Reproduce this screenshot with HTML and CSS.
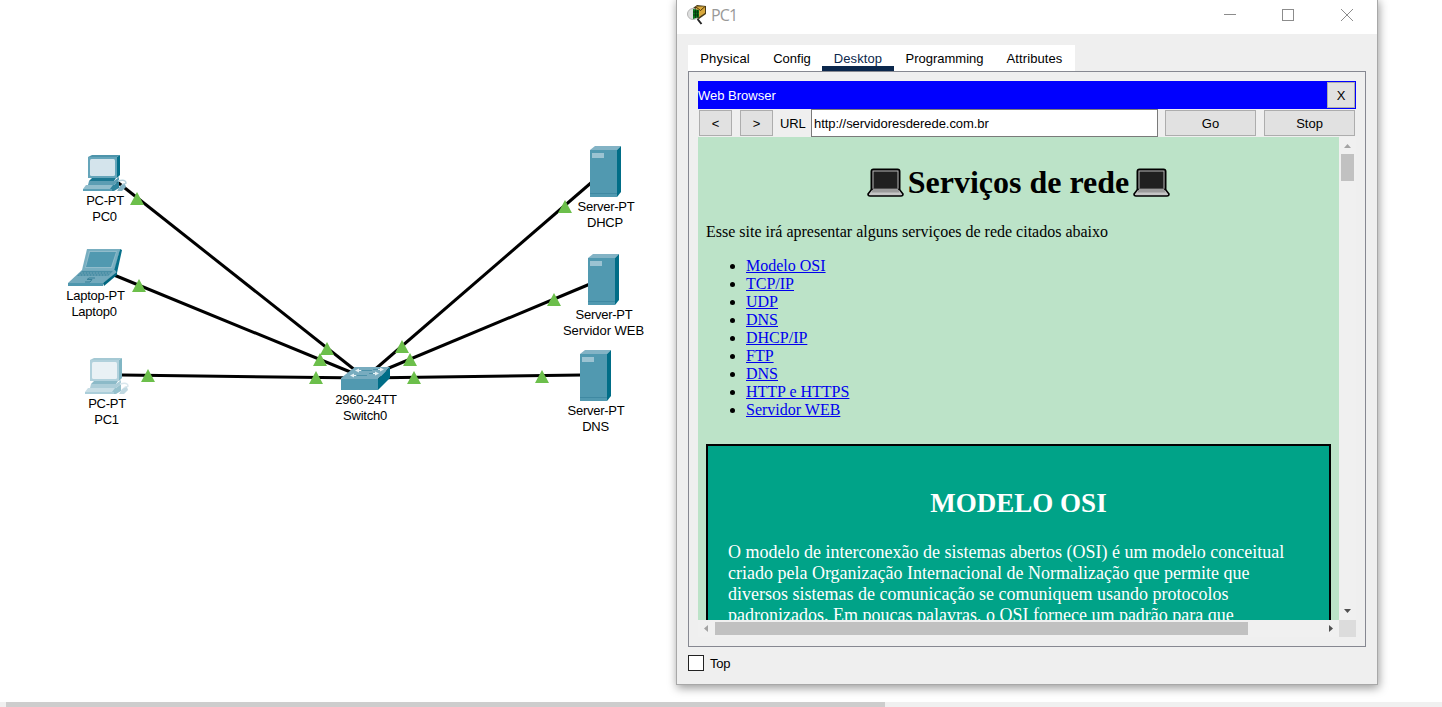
FILE: index.html
```html
<!DOCTYPE html>
<html lang="pt-BR">
<head>
<meta charset="utf-8">
<title>PC1</title>
<link rel="stylesheet" href="styles.css">
</head>
<body>
<main class="workspace">
  <svg class="topology" width="676" height="702" viewBox="0 0 676 702">
    <defs>
      <g id="server">
        <path d="M0 4L5 0H31L27 4Z" fill="#83b3c5"/>
        <path d="M27 4L31 0V46L27 51Z" fill="#006d87"/>
        <path d="M0 4H27V51H0Z" fill="#5199b0"/>
        <path d="M2 7H14V12H2Z" fill="#9bc3d2"/>
        <path d="M0 47.5H27" stroke="#3f89a2"/>
      </g>
      <g id="pc">
        <path d="M5 2L9 0H37L34 2Z" fill="#4d94ab"/>
        <path d="M34 2L37 0V20L34 23Z" fill="#06708a"/>
        <path d="M5 2H34V23H5Z" fill="#65a5ba"/>
        <rect x="7" y="4" width="25" height="17" rx="1.5" fill="#d4e4ec"/>
        <path d="M9 23H33L31 26H6Z" fill="#1c7892"/>
        <path d="M6 26H31L36 22V26L31 30H5Z" fill="#5b9db3"/>
        <path d="M4 30H31L36 26V33L31 36H0Z" fill="#2f849d"/>
        <path d="M3 30H30L27 34H0Z" fill="#91bdcc"/>
        <path d="M0 34H29V36H0Z" fill="#5a9fb6"/>
        <path d="M35 26Q43 24 43 28Q40 29 38 31" fill="none" stroke="#b4d0dc" stroke-width="1.5"/>
        <path d="M37 31L42 29L43 32L39 36H34Z" fill="#82b2c4"/>
      </g>
      <path id="link-up" d="M0-7L7 6H-7Z" fill="#6cbf4b"/>
    </defs>
    <g stroke="#000" stroke-width="3">
      <path d="M116 181L365 378"/>
      <path d="M114 275L365 378"/>
      <path d="M122 375L365 378"/>
      <path d="M592 182L365 378"/>
      <path d="M590 284L365 378"/>
      <path d="M582 375L365 378"/>
    </g>
    <use href="#pc" x="83" y="155"/>
    <g transform="translate(68 249)">
      <path d="M19 0H52L47 21H14Z" fill="#78aec0"/>
      <path d="M52 0L54 1L49 24L46 22Z" fill="#06708a"/>
      <path d="M21 2H49L44 19H17Z" fill="#91bccb"/>
      <path d="M22 3H48L43 18H18Z" fill="#5199b0"/>
      <path d="M14 21H47L49 24L35 34H0Z" fill="#72a9bc"/>
      <path d="M14 22H45L40 27H9Z" fill="#4a8fa6"/>
      <path d="M13 24H42M11 26H40" stroke="#84b3c3" stroke-width=".6" stroke-dasharray="2 1"/>
      <path d="M35 34L49 23V26L36 37Z" fill="#00667f"/>
      <path d="M0 34H35V37H0Z" fill="#4f97ae"/>
      <path d="M27 29H21L19 30.500H24L22 33H17" fill="none" stroke="#357f97"/>
    </g>
    <use href="#pc" x="85" y="358" opacity=".5"/>
    <use href="#server" x="590" y="146"/>
    <use href="#server" x="588" y="254"/>
    <use href="#server" x="580" y="350"/>
    <g transform="translate(341 367)">
      <path d="M0 11L14 0H49L37 12H0Z" fill="#78acbf"/>
      <path d="M37 12L49 0V11L37 23Z" fill="#006d87"/>
      <path d="M0 12H37V23H0Z" fill="#5199b0"/>
      <path d="M21 3.500H31M16 8.500H26M32 2.500H38M28 6.500H33" stroke="#4d92a9" stroke-width="1"/>
      <path d="M14 3.500L18 1.500V3H20V4H18V5.500ZM9 8.500L13 6.500V8H15V9H13V10.500ZM43 2.500L39 .5V2H37V3H39V4.500ZM38 6.500L34 4.500V6H32V7H34V8.500Z" fill="#e4f0f4"/>
    </g>
    <use href="#link-up" x="137" y="199"/>
    <use href="#link-up" x="139" y="286"/>
    <use href="#link-up" x="148" y="376"/>
    <use href="#link-up" x="327" y="349"/>
    <use href="#link-up" x="320" y="360"/>
    <use href="#link-up" x="316" y="378"/>
    <use href="#link-up" x="402" y="347"/>
    <use href="#link-up" x="410" y="360"/>
    <use href="#link-up" x="414" y="378"/>
    <use href="#link-up" x="565" y="207"/>
    <use href="#link-up" x="554" y="300"/>
    <use href="#link-up" x="542" y="377"/>
    <g class="node-label">
      <text x="105" y="205">PC-PT</text><text x="104.500" y="221">PC0</text>
      <text x="95.500" y="300">Laptop-PT</text><text x="94" y="316">Laptop0</text>
      <text x="107" y="408">PC-PT</text><text x="106.500" y="424">PC1</text>
      <text x="366" y="404">2960-24TT</text><text x="365" y="420">Switch0</text>
      <text x="606" y="211">Server-PT</text><text x="605" y="227">DHCP</text>
      <text x="604" y="319">Server-PT</text><text class="wide" x="603.500" y="335">Servidor WEB</text>
      <text x="596" y="415">Server-PT</text><text x="595.500" y="431">DNS</text>
    </g>
  </svg>
  <div class="canvas-scroll"><div class="canvas-thumb"></div></div>

  <section class="window">
    <header class="titlebar">
      <svg class="app-icon" width="20" height="20" viewBox="0 0 20 20">
        <path d="M6 3L10 0L19 1V9L12 14L6 12Z" fill="#493b19"/>
        <path d="M9 1.500L18 1.500V8L12 12L9 9Z" fill="#d8a83c"/>
        <path d="M9 2L13.500 5.500L18 1.500" fill="none" stroke="#4d350b"/>
        <circle cx="6" cy="9" r="5.500" fill="#dedfdf" stroke="#b5b5b5"/>
        <path d="M6 4L12 5V12L6 14Z" fill="#08791b"/>
        <path d="M8.500 4.500V13M10.500 5V12.500M6 7H12M6 10H12" stroke="#092c0c" stroke-width=".8"/>
        <path d="M10.500 14L14.500 19" stroke="#222" stroke-width="2"/>
      </svg>
      <span class="title">PC1</span>
      <svg class="controls" width="130" height="14" viewBox="0 0 130 14" fill="none" stroke="#8c8c8c">
        <path d="M0 6.500H12"/><rect x="58.500" y="1.500" width="11" height="11"/><path d="M117 1L129 13M129 1L117 13"/>
      </svg>
    </header>
    <nav class="tabs">
      <span class="tab physical">Physical</span><span class="tab config">Config</span><span class="tab desktop">Desktop</span><span class="tab programming">Programming</span><span class="tab attributes">Attributes</span>
    </nav>
    <div class="panel">
      <div class="app-bar"><span>Web Browser</span><button class="btn close">X</button></div>
      <div class="address-row">
        <button class="btn nav">&lt;</button><button class="btn nav">&gt;</button>
        <label class="url-label">URL</label>
        <div class="url-field">http://servidoresderede.com.br</div>
        <button class="btn action">Go</button><button class="btn action">Stop</button>
      </div>
      <div class="viewport">
        <article class="page">
          <h1 class="page-title">
            <svg class="laptop" width="37" height="30" viewBox="0 0 37 30">
              <rect x="4.500" y="1.500" width="28" height="21" rx="2" fill="#202020" stroke="#000" stroke-width="2"/>
              <rect x="6" y="3" width="25" height="18" fill="#202020" stroke="#b5b5b5"/>
              <path d="M4.500 21.500H32.500L36 26Q36 28 34 28H3Q1 28 1 26Z" fill="#c5c5c5" stroke="#000" stroke-width="1.600"/>
              <path d="M6 21H31L32.500 24.500H4.500Z" fill="#9b9b9b"/>
            </svg><span class="heading">Serviços de rede</span><svg class="laptop" width="37" height="30" viewBox="0 0 37 30">
              <rect x="4.500" y="1.500" width="28" height="21" rx="2" fill="#202020" stroke="#000" stroke-width="2"/>
              <rect x="6" y="3" width="25" height="18" fill="#202020" stroke="#b5b5b5"/>
              <path d="M4.500 21.500H32.500L36 26Q36 28 34 28H3Q1 28 1 26Z" fill="#c5c5c5" stroke="#000" stroke-width="1.600"/>
              <path d="M6 21H31L32.500 24.500H4.500Z" fill="#9b9b9b"/>
            </svg>
          </h1>
          <p class="intro">Esse site irá apresentar alguns serviçoes de rede citados abaixo</p>
          <ul class="links">
            <li><a href="#osi">Modelo OSI</a></li><li><a href="#">TCP/IP</a></li><li><a href="#">UDP</a></li><li><a href="#">DNS</a></li><li><a href="#">DHCP/IP</a></li><li><a href="#">FTP</a></li><li><a href="#">DNS</a></li><li><a href="#">HTTP e HTTPS</a></li><li><a href="#">Servidor WEB</a></li>
          </ul>
          <section class="card" id="osi">
            <h2 class="card-title">MODELO OSI</h2>
            <p class="card-text">O modelo de interconexão de sistemas abertos (OSI) é um modelo conceitual<br>criado pela Organização Internacional de Normalização que permite que<br>diversos sistemas de comunicação se comuniquem usando protocolos<br>padronizados. Em poucas palavras, o OSI fornece um padrão para que</p>
          </section>
        </article>
        <div class="vscroll">
          <svg width="17" height="17"><path d="M5 11H12L8.500 7Z" fill="#a3a3a3"/></svg>
          <div class="vthumb"></div>
          <svg class="down" width="17" height="17"><path d="M5 6H12L8.500 10Z" fill="#505050"/></svg>
        </div>
        <div class="hscroll">
          <svg width="17" height="17"><path d="M10 5V12L6 8.500Z" fill="#a3a3a3"/></svg>
          <div class="hthumb"></div>
          <svg class="right" width="17" height="17"><path d="M7 5V12L11 8.500Z" fill="#505050"/></svg>
        </div>
        <div class="corner"></div>
      </div>
    </div>
    <div class="top-option"><span class="checkbox"></span><span>Top</span></div>
  </section>
</main>
</body>
</html>
```

FILE: styles.css
```css
* { box-sizing: border-box; }
body { margin: 0; background: #fff; overflow: hidden; font: 13px "Liberation Sans", Arial, sans-serif; color: #000; }
svg { display: block; flex: none; }
.workspace { position: relative; width: 1442px; height: 707px; overflow: hidden; }
.topology { height: 702px; }
.node-label { font-size: 13px; text-anchor: middle; letter-spacing: -.25px; }
.wide { letter-spacing: -.05px; }
.canvas-scroll { height: 5px; background: #f0f0f0; padding-left: 6px; }
.canvas-thumb { width: 879px; height: 5px; background: #cdcdcd; }

.window { position: absolute; left: 676px; top: -2px; width: 702px; height: 687px; border: 1px solid #a8a8a8; background: #efefef; box-shadow: 1px 3px 9px rgba(0,0,0,.4); padding-right: 11px; display: flex; flex-direction: column; }
.titlebar { height: 35px; margin-right: -11px; padding: 0 23px 0 10px; background: #fff; display: flex; align-items: center; }
.app-icon { margin-bottom: 3px; }
.title { font: 16px "Open Sans", sans-serif; letter-spacing: -.9px; color: #999; margin-left: 4px; margin-bottom: 3px; }
.controls { margin-left: auto; margin-bottom: 4px; }
.tabs { display: flex; width: 387px; height: 26px; margin: 11px 0 0 11px; background: #fff; line-height: 27px; }
.tab { text-align: center; }
.physical { width: 74px; letter-spacing: .15px; }
.config { width: 60px; }
.desktop { width: 72px; color: #0b274c; border-bottom: 5px solid #0b274c; letter-spacing: .1px; }
.programming { width: 101px; }
.attributes { width: 79px; letter-spacing: .1px; }
.panel { width: 678px; height: 576px; margin-left: 11px; border: 1px solid #868891; padding: 9px 9px 0; }
.app-bar { width: 658px; height: 28px; padding-right: 1px; background: #00f; color: #fff; display: flex; align-items: center; justify-content: space-between; }
.btn { height: 26px; padding: 0; border: 1px solid #adadad; background: #e1e1e1; font: inherit; color: #000; }
.close { width: 28px; }
.address-row { display: flex; width: 658px; height: 28px; padding: 1px 1px 0; }
.nav { width: 33px; margin-right: 8px; }
.url-label { line-height: 27px; width: 30px; margin-left: -1px; margin-right: 1px; letter-spacing: -.2px; }
.url-field { width: 347px; height: 28px; margin-top: -1px; border: 1px solid #7a7a7a; background: #fff; line-height: 27px; padding-left: 2px; letter-spacing: -.05px; }
.action { width: 91px; margin-left: 7px; }
.action + .action { margin-left: 8px; }
.viewport { display: grid; grid-template: 483px 17px / 641px 17px; width: 658px; }
.page { background: #bce3c8; height: 483px; overflow: hidden; padding: 0 8px; font: 16px/18px "Liberation Serif", "Times New Roman", serif; }
.page-title { display: flex; justify-content: center; align-items: center; height: 37px; margin: 27px 0 0; font-size: 32px; line-height: 37px; }
.heading { margin: 0 4px; white-space: nowrap; }
.intro { margin: 22px 0 16px; }
.links { margin: 0; padding-left: 40px; }
.links a { color: #00e; }
.card { margin-top: 25px; height: 300px; border: 2px solid #000; background: #00a388; color: #fff; padding: 41px 20px 0; }
.card-title { margin: 0; font-size: 27px; line-height: 32px; text-align: center; }
.card-text { margin: 23px 0 0; font-size: 18px; line-height: 21px; white-space: nowrap; }
.vscroll, .hscroll { background: #f0f0f0; display: flex; }
.vscroll { flex-direction: column; }
.vthumb { width: 13px; height: 27px; margin-left: 2px; background: #c1c1c1; }
.down { margin-top: auto; }
.hthumb { width: 533px; height: 13px; margin-top: 2px; background: #c1c1c1; }
.right { margin-left: auto; }
.corner { background: #dcdcdc; }
.top-option { display: flex; align-items: center; gap: 6px; margin: 8px 0 0 11px; letter-spacing: -.2px; }
.checkbox { width: 16px; height: 16px; border: 1px solid #222; background: #fff; }
```
